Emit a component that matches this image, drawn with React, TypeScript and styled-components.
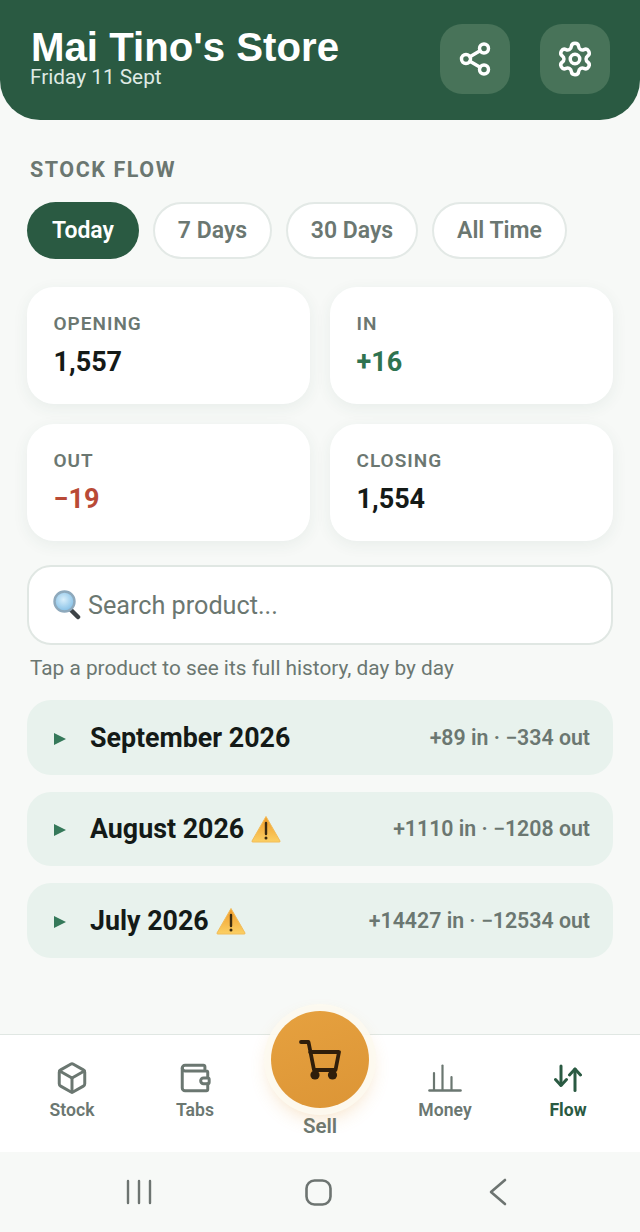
import React from "react";
import styled, { createGlobalStyle } from "styled-components";
import { Share2, Settings, Box, Wallet } from "lucide-react";

const Global = createGlobalStyle`
  html, body { margin: 0; padding: 0; background: #f7f9f7; }
  body { font-family: Roboto, "Liberation Sans", sans-serif; }
  * { box-sizing: border-box; }
`;

const Page = styled.div`
  width: 640px;
  height: 1232px;
  display: flex;
  flex-direction: column;
  overflow: hidden;
  background: #f7f9f7;
`;

const Header = styled.header`
  height: 120px;
  flex: none;
  background: #2a5a42;
  border-radius: 0 0 40px 40px;
  padding: 24px 30px 0 30px;
  display: flex;
  justify-content: space-between;
  align-items: flex-start;
`;

const TitleBlock = styled.div`
  display: flex;
  flex-direction: column;
  padding: 5px 0 0 1px;
`;

const Title = styled.h1`
  margin: 0;
  font-family: "Liberation Sans", Arial, sans-serif;
  font-size: 40.2px;
  line-height: 37px;
  font-weight: 700;
  color: #ffffff;
`;

const Subtitle = styled.div`
  font-size: 20.8px;
  line-height: 22px;
  margin-left: -1px;
  color: #dfeae4;
`;

const HeaderActions = styled.div`
  display: flex;
  gap: 30px;
`;

const IconButton = styled.button`
  width: 70px;
  height: 70px;
  border: 0;
  padding: 0;
  border-radius: 22px;
  background: #487359;
  color: #ffffff;
  display: flex;
  align-items: center;
  justify-content: center;
`;

const Main = styled.main`
  flex: 1;
  padding: 38px 27px 0 27px;
  display: flex;
  flex-direction: column;
`;

const SectionLabel = styled.div`
  font-size: 21.5px;
  line-height: 24px;
  font-weight: 700;
  letter-spacing: 1.55px;
  color: #6b7771;
  padding-left: 3px;
`;

const Chips = styled.div`
  display: flex;
  gap: 14px;
  margin-top: 20px;
`;

const Chip = styled.div<{ $active?: boolean; $w: number }>`
  width: ${(p) => p.$w}px;
  height: 57px;
  border-radius: 29px;
  display: flex;
  align-items: center;
  justify-content: center;
  font-size: 23px;
  font-weight: 600;
  padding-bottom: 1px;
  color: ${(p) => (p.$active ? "#ffffff" : "#6b7771")};
  background: ${(p) => (p.$active ? "#2a5a42" : "#ffffff")};
  border: ${(p) => (p.$active ? "0" : "2.5px solid #e3e9e6")};
`;

const StatGrid = styled.div`
  display: grid;
  grid-template-columns: 283px 283px;
  grid-auto-rows: 117px;
  column-gap: 20px;
  row-gap: 20px;
  margin-top: 28px;
`;

const StatCard = styled.div`
  background: #ffffff;
  border-radius: 27px;
  padding: 25px 26px 0 26.5px;
  box-shadow: 0 4px 16px rgba(42, 90, 66, 0.07);
`;

const StatLabel = styled.div`
  font-size: 19px;
  line-height: 24px;
  font-weight: 600;
  letter-spacing: 1px;
  color: #6b7771;
`;

const StatValue = styled.div<{ $color?: string }>`
  font-size: 27px;
  line-height: 32px;
  font-weight: 700;
  margin-top: 9.5px;
  color: ${(p) => p.$color || "#141a17"};
`;

const SearchBox = styled.div`
  height: 80px;
  margin-top: 24px;
  background: #ffffff;
  border: 2.5px solid #e0e7e3;
  border-radius: 24px;
  padding: 0 0 0 24px;
  display: flex;
  align-items: center;
  gap: 7px;
  font-size: 25.2px;
  color: #6b7771;
`;

const Hint = styled.div`
  font-size: 20.8px;
  line-height: 24px;
  color: #6b7771;
  margin-top: 11px;
  padding-left: 3px;
`;

const Months = styled.div`
  display: flex;
  flex-direction: column;
  gap: 17px;
  margin-top: 20px;
`;

const MonthRow = styled.div`
  height: 74.5px;
  border-radius: 24px;
  background: #e8f2ed;
  padding: 0 23px 0 27px;
  display: flex;
  align-items: center;
`;

const Caret = styled.span`
  width: 0;
  height: 0;
  border-left: 12px solid #35795a;
  border-top: 6.5px solid transparent;
  border-bottom: 6.5px solid transparent;
  margin-top: 3px;
  margin-right: 24px;
  flex: none;
`;

const MonthName = styled.span`
  font-size: 26.8px;
  line-height: 32px;
  font-weight: 700;
  color: #141a17;
  display: flex;
  align-items: center;
  gap: 7px;
  padding-top: 1px;
`;

const MonthTotals = styled.span`
  margin-left: auto;
  font-size: 21.3px;
  font-weight: 600;
  color: #6b7771;
`;

const BottomNav = styled.nav`
  position: relative;
  height: 118px;
  flex: none;
  background: #ffffff;
  border-top: 1.5px solid #e0e7e3;
  padding: 0 10px;
  display: grid;
  grid-template-columns: 124px 122px 128px 122px 124px;
`;

const NavItem = styled.div<{ $active?: boolean }>`
  display: flex;
  flex-direction: column;
  align-items: center;
  padding-top: 24px;
  font-size: 17.6px;
  line-height: 22px;
  font-weight: ${(p) => (p.$active ? 700 : 600)};
  color: ${(p) => (p.$active ? "#2a5a42" : "#6b7771")};
`;

const NavIcon = styled.span`
  height: 38px;
  display: flex;
  align-items: center;
  justify-content: center;
  margin-bottom: 2px;
`;

const SellItem = styled.div`
  display: flex;
  flex-direction: column;
  justify-content: flex-end;
  align-items: center;
  padding-bottom: 14px;
  font-size: 20.5px;
  line-height: 24px;
  font-weight: 600;
  color: #6b7771;
`;

const SellButton = styled.div`
  position: absolute;
  left: 271px;
  top: -24px;
  width: 98px;
  height: 97px;
  border-radius: 50%;
  background: linear-gradient(160deg, #e6a13f 0%, #dc9536 100%);
  box-shadow: 0 0 0 7px rgba(253, 249, 240, 0.9), 0 8px 20px rgba(224, 150, 50, 0.32);
  display: flex;
  align-items: center;
  justify-content: center;
  color: #2f1e0b;
`;

const SystemBar = styled.div`
  height: 80px;
  flex: none;
  background: #f7f9f7;
  padding: 0 0 0 126px;
  display: flex;
  align-items: center;
  gap: 153px;
  color: #6d7471;
`;

const Magnifier = () => (
  <svg width="28" height="30" viewBox="0 0 28 30">
    <defs>
      <radialGradient id="glass" cx="0.45" cy="0.4" r="0.6">
        <stop offset="0" stopColor="#d9effb" />
        <stop offset="1" stopColor="#83bfe6" />
      </radialGradient>
    </defs>
    <path d="M18 20 L25 27" stroke="#3d4347" strokeWidth="4.5" strokeLinecap="round" />
    <circle cx="11.5" cy="11.5" r="10" fill="url(#glass)" stroke="#8ea9bc" strokeWidth="2.4" />
  </svg>
);

const Warning = ({ id }: { id: string }) => (
  <svg width="30" height="28" viewBox="0 0 30 28">
    <defs>
      <linearGradient id={id} x1="0" y1="0" x2="0" y2="1">
        <stop offset="0" stopColor="#f09a28" />
        <stop offset="1" stopColor="#fbd064" />
      </linearGradient>
    </defs>
    <path d="M15 1.5 L29 26 Q29.5 27 28 27 L2 27 Q0.5 27 1 26 Z" fill={`url(#${id})`} stroke="#f2bc58" strokeWidth="1" strokeLinejoin="round" />
    <path d="M15 8 L15 19" stroke="#3a2a10" strokeWidth="2.4" strokeLinecap="round" />
    <circle cx="15" cy="23" r="1.5" fill="#3a2a10" />
  </svg>
);

const CartIcon = () => (
  <svg width="42" height="40" viewBox="0 0 42 40" fill="none" stroke="currentColor" strokeWidth="3.8" strokeLinecap="round" strokeLinejoin="round">
    <path d="M2 2 H9.5 L15 30 H36.5 L40 12 H11" />
    <circle cx="16" cy="35" r="4.6" fill="currentColor" stroke="none" />
    <circle cx="33.5" cy="35" r="4.6" fill="currentColor" stroke="none" />
  </svg>
);

const MoneyIcon = () => (
  <svg width="34" height="28" viewBox="0 0 34 28" fill="none" stroke="currentColor" strokeWidth="2.2" strokeLinecap="round">
    <path d="M1.5 26.5 H32.5" strokeWidth="2.6" />
    <path d="M6 26 V9" />
    <path d="M14.5 26 V1.5" />
    <path d="M23.5 26 V13" />
  </svg>
);

const FlowIcon = () => (
  <svg width="28" height="28" viewBox="0 0 28 28" fill="none" stroke="currentColor" strokeWidth="3" strokeLinecap="round" strokeLinejoin="round">
    <path d="M7 2 V21" />
    <path d="M1.5 15.5 L7 21.5 L12.5 15.5" />
    <path d="M21 26.5 V5" />
    <path d="M15.5 11 L21 5 L26.5 11" />
  </svg>
);

const MenuIcon = () => (
  <svg width="26" height="26" viewBox="0 0 26 26" stroke="currentColor" strokeWidth="2.4" strokeLinecap="round">
    <path d="M2 2 V24 M13 2 V24 M24 2 V24" />
  </svg>
);

const HomeIcon = () => (
  <svg width="27" height="27" viewBox="0 0 27 27" fill="none" stroke="currentColor" strokeWidth="2.6">
    <rect x="1.5" y="1.5" width="24" height="24" rx="8" />
  </svg>
);

const BackIcon = () => (
  <svg width="23" height="28" viewBox="-3 0 23 28" fill="none" stroke="currentColor" strokeWidth="2.6" strokeLinecap="round" strokeLinejoin="round">
    <path d="M17 2 L3 14 L17 26" />
  </svg>
);

const months = [
  { name: "September 2026", totals: "+89 in · −334 out", warn: false },
  { name: "August 2026", totals: "+1110 in · −1208 out", warn: true },
  { name: "July 2026", totals: "+14427 in · −12534 out", warn: true },
];

export default function App() {
  return (
    <Page>
      <Global />
      <Header>
        <TitleBlock>
          <Title>Mai Tino's Store</Title>
          <Subtitle>Friday 11 Sept</Subtitle>
        </TitleBlock>
        <HeaderActions>
          <IconButton><Share2 size={36} strokeWidth={2.3} /></IconButton>
          <IconButton><Settings size={38} strokeWidth={2.2} /></IconButton>
        </HeaderActions>
      </Header>
      <Main>
        <SectionLabel>STOCK FLOW</SectionLabel>
        <Chips>
          <Chip $active $w={112}>Today</Chip>
          <Chip $w={119}>7 Days</Chip>
          <Chip $w={132}>30 Days</Chip>
          <Chip $w={135}>All Time</Chip>
        </Chips>
        <StatGrid>
          <StatCard><StatLabel>OPENING</StatLabel><StatValue>1,557</StatValue></StatCard>
          <StatCard><StatLabel>IN</StatLabel><StatValue $color="#2f7350">+16</StatValue></StatCard>
          <StatCard><StatLabel>OUT</StatLabel><StatValue $color="#b94a36">−19</StatValue></StatCard>
          <StatCard><StatLabel>CLOSING</StatLabel><StatValue>1,554</StatValue></StatCard>
        </StatGrid>
        <SearchBox><Magnifier />Search product...</SearchBox>
        <Hint>Tap a product to see its full history, day by day</Hint>
        <Months>
          {months.map((m, i) => (
            <MonthRow key={m.name}>
              <Caret />
              <MonthName>{m.name}{m.warn && <Warning id={`warn${i}`} />}</MonthName>
              <MonthTotals>{m.totals}</MonthTotals>
            </MonthRow>
          ))}
        </Months>
      </Main>
      <BottomNav>
        <NavItem><NavIcon><Box size={34} strokeWidth={2.1} /></NavIcon>Stock</NavItem>
        <NavItem><NavIcon><Wallet size={34} strokeWidth={2.1} /></NavIcon>Tabs</NavItem>
        <SellItem>Sell</SellItem>
        <NavItem><NavIcon><MoneyIcon /></NavIcon>Money</NavItem>
        <NavItem $active><NavIcon><FlowIcon /></NavIcon>Flow</NavItem>
        <SellButton><CartIcon /></SellButton>
      </BottomNav>
      <SystemBar>
        <MenuIcon />
        <HomeIcon />
        <BackIcon />
      </SystemBar>
    </Page>
  );
}
